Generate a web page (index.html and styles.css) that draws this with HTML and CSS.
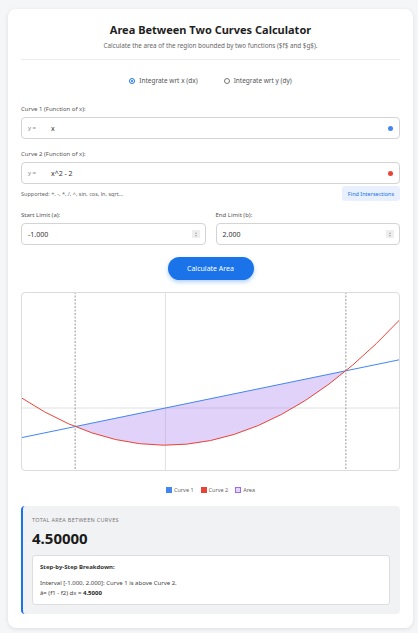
FILE: index.html
```html
<!DOCTYPE html>
<html lang="en">
<head>
<meta charset="utf-8">
<title>Area Between Two Curves Calculator</title>
<link rel="stylesheet" href="styles.css">
</head>
<body>
<main class="card">
  <header class="head">
    <h1 class="title">Area Between Two Curves Calculator</h1>
    <p class="subtitle">Calculate the area of the region bounded by two functions ($f$ and $g$).</p>
  </header>

  <div class="radios">
    <label class="radio"><span class="rdot on"></span>Integrate wrt x (dx)</label>
    <label class="radio"><span class="rdot"></span>Integrate wrt y (dy)</label>
  </div>

  <div class="field">
    <div class="flabel">Curve 1 (Function of x):</div>
    <div class="finput">
      <span class="prefix">y =</span>
      <span class="fval">x</span>
      <span class="cdot blue"></span>
    </div>
  </div>

  <div class="field f2">
    <div class="flabel">Curve 2 (Function of x):</div>
    <div class="finput">
      <span class="prefix">y =</span>
      <span class="fval">x^2 - 2</span>
      <span class="cdot red"></span>
    </div>
  </div>

  <div class="helprow">
    <span class="help">Supported: +, -, *, /, ^, sin, cos, ln, sqrt...</span>
    <button class="findbtn">Find Intersections</button>
  </div>

  <div class="limits">
    <div class="lim">
      <div class="flabel">Start Limit (a):</div>
      <div class="finput num"><span class="fval">-1.000</span><span class="spin"><i class="up"></i><i class="dn"></i></span></div>
    </div>
    <div class="lim">
      <div class="flabel">End Limit (b):</div>
      <div class="finput num"><span class="fval">2.000</span><span class="spin"><i class="up"></i><i class="dn"></i></span></div>
    </div>
  </div>

  <div class="btnrow"><button class="calc">Calculate Area</button></div>

  <div class="chart">
    <svg width="377" height="177" viewBox="1 1 377 177" xmlns="http://www.w3.org/2000/svg">
      <line x1="144.4" y1="0" x2="144.4" y2="179" stroke="#e0e0e0" stroke-width="1"/>
      <line x1="0" y1="116" x2="379" y2="116" stroke="#e0e0e0" stroke-width="1"/>
      <path d="M54.14 134.6 L324.86 78.8 Q189.5 190.4 54.14 134.6 Z" fill="rgba(170,130,235,0.36)"/>
      <line x1="54.14" y1="0" x2="54.14" y2="179" stroke="#9a9a9a" stroke-width="1" stroke-dasharray="2 1.5"/>
      <line x1="324.86" y1="0" x2="324.86" y2="179" stroke="#9a9a9a" stroke-width="1" stroke-dasharray="2 1.5"/>
      <line x1="0" y1="145.76" x2="379" y2="67.64" stroke="#4285f4" stroke-width="1"/>
      <path d="M0 105.58 Q189.5 230.58 379 27.46" fill="none" stroke="#ea4335" stroke-width="1"/>
    </svg>
  </div>

  <div class="legend">
    <span class="li"><span class="sw sw-blue"></span>Curve 1</span>
    <span class="li"><span class="sw sw-red"></span>Curve 2</span>
    <span class="li"><span class="sw sw-area"></span>Area</span>
  </div>

  <section class="result">
    <div class="rlabel">TOTAL AREA BETWEEN CURVES</div>
    <div class="rvalue">4.50000</div>
    <div class="steps">
      <div class="shead">Step-by-Step Breakdown:</div>
      <div class="sline">Interval [-1.000, 2.000]: Curve 1 is above Curve 2.</div>
      <div class="sline">â= (f1 - f2) dx = <b>4.5000</b></div>
    </div>
  </section>
</main>
</body>
</html>
```

FILE: styles.css
```css
* { box-sizing: border-box; }
html, body { margin: 0; padding: 0; }
body {
  background: #f5f6f8;
  font-family: "Noto Sans", "Open Sans", sans-serif;
  color: #333;
  padding: 9px 5px 5px 8px;
}
.card {
  background: #fff;
  border-radius: 8px;
  box-shadow: 0 1px 4px rgba(0,0,0,0.10);
  padding: 14px 13px 14px 13px;
}
.head {
  text-align: center;
  border-bottom: 1px solid #ececec;
  padding-bottom: 9px;
}
.title {
  margin: 0;
  font-size: 11px;
  line-height: 14px;
  font-weight: 700;
  color: #1f1f1f;
}
.subtitle {
  margin: 4px 0 0;
  font-size: 6.3px;
  line-height: 9px;
  color: #666;
}
.radios {
  margin-top: 16px;
  display: flex;
  justify-content: center;
  gap: 26px;
  height: 10px;
  align-items: center;
}
.radio {
  display: flex;
  align-items: center;
  gap: 4px;
  font-size: 6.5px;
  line-height: 10px;
  color: #555;
}
.rdot {
  width: 6px;
  height: 6px;
  border-radius: 50%;
  border: 1px solid #777;
  background: #fff;
  position: relative;
}
.rdot.on {
  border-color: #1a73e8;
}
.rdot.on::after {
  content: "";
  position: absolute;
  left: 1px; top: 1px;
  width: 2px; height: 2px;
  border-radius: 50%;
  background: #1a73e8;
}
.field { margin-top: 19px; }
.field.f2 { margin-top: 11px; }
.flabel {
  font-size: 6px;
  line-height: 8px;
  color: #555;
  margin-bottom: 4px;
}
.finput {
  height: 22px;
  border: 1px solid #d4d4d4;
  border-radius: 4px;
  display: flex;
  align-items: center;
  padding: 0 6px;
  background: #fff;
}
.prefix {
  width: 23px;
  font-size: 6px;
  color: #888;
}
.fval {
  flex: 1;
  font-size: 7px;
  color: #333;
}
.cdot {
  width: 5px;
  height: 5px;
  border-radius: 50%;
}
.cdot.blue { background: #4285f4; }
.cdot.red { background: #ea4335; }
.helprow {
  margin-top: 2px;
  display: flex;
  justify-content: space-between;
  align-items: center;
  height: 15px;
}
.help {
  font-size: 5.5px;
  color: #666;
}
.findbtn {
  border: 0;
  background: #e8f0fe;
  color: #1a73e8;
  font-family: inherit;
  font-size: 5.5px;
  height: 15px;
  width: 58px;
  padding: 0;
  border-radius: 3px;
}
.limits {
  margin-top: 10px;
  display: grid;
  grid-template-columns: 1fr 1fr;
  gap: 10px;
}
.finput.num { padding-right: 5px; }
.num .fval { font-size: 7px; }
.spin {
  width: 8px;
  height: 8px;
  background: #eee;
  display: flex;
  flex-direction: column;
  align-items: center;
  justify-content: center;
  gap: 1px;
}
.spin i {
  width: 0; height: 0;
  border-left: 1.5px solid transparent;
  border-right: 1.5px solid transparent;
}
.spin .up { border-bottom: 2px solid #aaa; }
.spin .dn { border-top: 2px solid #aaa; }
.btnrow {
  margin-top: 12px;
  display: flex;
  justify-content: center;
}
.calc {
  width: 86px;
  height: 23px;
  border: 0;
  border-radius: 12px;
  background: #1a73e8;
  color: #fff;
  font-family: inherit;
  font-size: 7px;
  box-shadow: 0 2px 4px rgba(26,115,232,0.35);
  padding: 0;
}
.chart {
  margin-top: 12px;
  height: 179px;
  border: 1px solid #dcdcdc;
  border-radius: 4px;
  overflow: hidden;
}
.chart svg { display: block; }
.legend {
  margin-top: 15px;
  display: flex;
  justify-content: center;
  gap: 7px;
  font-size: 5.5px;
  line-height: 8px;
  color: #666;
}
.li { display: flex; align-items: center; gap: 2px; }
.sw { width: 6px; height: 6px; display: inline-block; }
.sw-blue { background: #4285f4; }
.sw-red { background: #ea4335; }
.sw-area { background: #e3d6f8; border: 1px solid #9b6cf0; }
.result {
  margin-top: 12px;
  background: #f1f2f4;
  border-left: 2px solid #1a73e8;
  border-radius: 4px;
  padding: 10px 10px 9px 9px;
}
.rlabel {
  font-size: 5.5px;
  line-height: 8px;
  letter-spacing: 0.3px;
  color: #777;
}
.rvalue {
  margin-top: 5px;
  font-size: 15px;
  line-height: 18px;
  font-weight: 700;
  color: #1a1a1a;
}
.steps {
  margin-top: 8px;
  background: #fff;
  border: 1px solid #dedede;
  border-radius: 3px;
  padding: 7px 7px 6px 7px;
}
.shead {
  font-size: 6px;
  line-height: 8px;
  font-weight: 700;
  color: #333;
  margin-bottom: 8px;
}
.sline {
  font-size: 6px;
  line-height: 9.5px;
  color: #444;
}
.sline b { color: #222; }
```
